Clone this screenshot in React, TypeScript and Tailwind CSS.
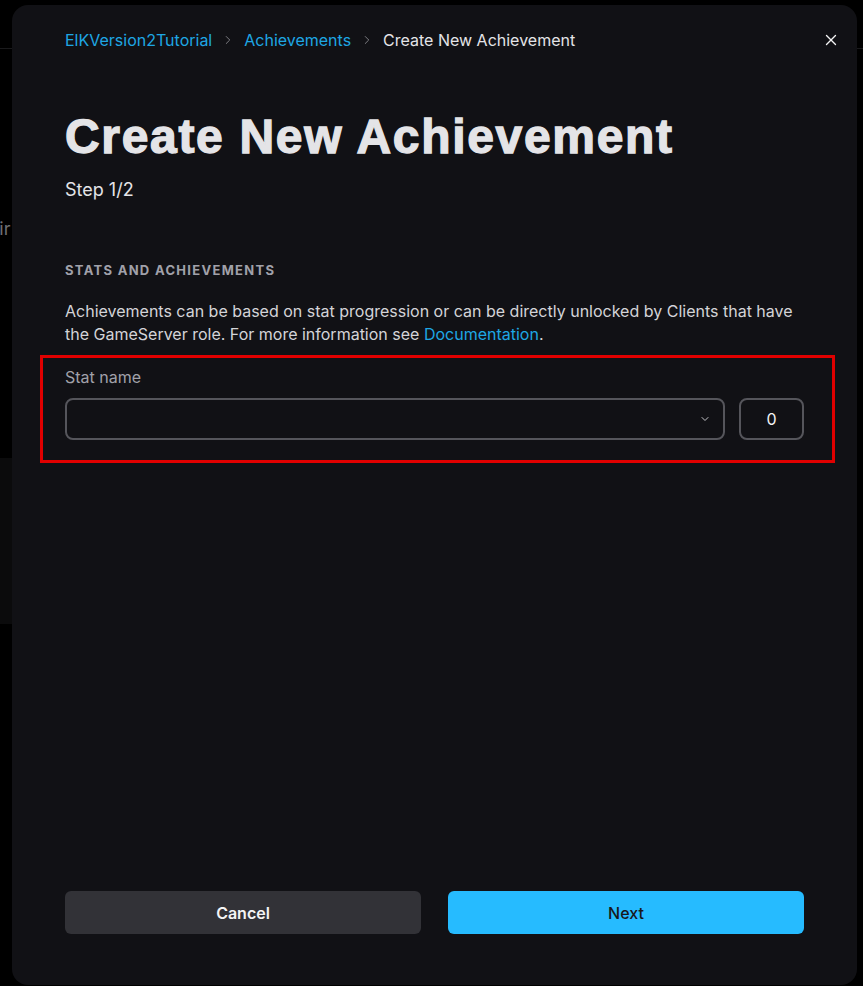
import { X, ChevronDown, ChevronRight } from "lucide-react";

const Breadcrumb = () => {
  return (
    <div className="flex items-center text-[16px] leading-[22px]">
      <span className="text-[#1ea7e4]">ElKVersion2Tutorial</span>
      <ChevronRight className="mx-[9px] h-[14px] w-[14px] text-[#8a8a90]" strokeWidth={1.5} />
      <span className="text-[#1ea7e4]">Achievements</span>
      <ChevronRight className="mx-[9px] h-[14px] w-[14px] text-[#8a8a90]" strokeWidth={1.5} />
      <span className="text-[#e4e4e7]">Create New Achievement</span>
    </div>
  );
};

const StatField = () => {
  return (
    <div className="-ml-[25px] -mr-[31px] mt-[9px] border-[3px] border-[#e00000] pb-[20px] pl-[22px] pr-[28px] pt-[7px]">
      <div className="text-[16px] leading-[24px] text-[#a1a1aa]">Stat name</div>
      <div className="mt-[9px] flex gap-[14px]">
        <div className="flex h-[42px] flex-1 items-center justify-end rounded-[8px] border-2 border-[#55555b] pr-[12px]">
          <ChevronDown className="h-[12px] w-[12px] text-[#c4c4c8]" strokeWidth={2} />
        </div>
        <div className="flex h-[42px] w-[65px] items-center justify-center rounded-[8px] border-2 border-[#55555b] text-[16px] text-[#f4f4f5]">
          0
        </div>
      </div>
    </div>
  );
};

export default function App() {
  return (
    <div className="relative h-[986px] w-full overflow-hidden bg-black font-['Inter',sans-serif]">
      {/* page behind the modal */}
      <div className="h-[49px] border-b border-[#1a1a1c]"></div>
      <div className="-ml-[21px] mt-[166px] text-[18px] text-[#6e6e73]">Fair play rules</div>
      <div className="mt-[216px] h-[166px] w-[300px] bg-[#0b0b0c]"></div>

      <div className="absolute left-[12px] top-[5px] flex h-[980px] w-[845px] flex-col rounded-[16px] bg-[#111115] px-[53px] pb-[51px] pt-[24px]">
        <div className="flex items-center justify-between">
          <Breadcrumb />
          <X className="-mr-[36px] h-[18px] w-[18px] text-[#f4f4f5]" strokeWidth={1.8} />
        </div>

        <h1 className="mt-[62px] font-['Liberation_Sans',Arial,sans-serif] text-[48px] font-black leading-[48px] tracking-[0.035em] text-[#e4e4e7] [-webkit-text-stroke:1.3px_#e4e4e7]">
          Create New Achievement
        </h1>
        <div className="mt-[17px] text-[18px] leading-[24px] text-[#e4e4e7]">Step 1/2</div>

        <div className="mt-[60px] text-[13px] font-bold uppercase leading-[16px] tracking-[0.1em] text-[#a1a1aa]">
          Stats and Achievements
        </div>
        <p className="mt-[22px] text-[16px] leading-[23px] text-[#d4d4d8]">
          Achievements can be based on stat progression or can be directly unlocked by Clients that have
          the GameServer role. For more information see{" "}
          <span className="text-[#1ea7e4]">Documentation</span>.
        </p>

        <StatField />

        <div className="mt-auto flex gap-[27px]">
          <button className="h-[43px] flex-1 rounded-[6px] bg-[#323237] text-[16px] font-semibold text-[#f4f4f5]">
            Cancel
          </button>
          <button className="h-[43px] flex-1 rounded-[6px] bg-[#26bbff] text-[16px] font-medium text-[#18181b]">
            Next
          </button>
        </div>
      </div>
    </div>
  );
}
